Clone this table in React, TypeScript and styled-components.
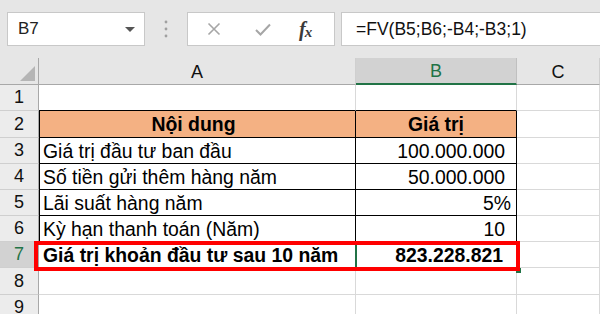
import React from "react";
import styled, { createGlobalStyle } from "styled-components";

const GlobalStyle = createGlobalStyle`
  html, body { margin: 0; padding: 0; background: #fff; }
  body { font-family: "Liberation Sans", Arial, sans-serif; }
`;

const GREEN = "#217346";
const GRID = "#d9d9d9";

type Row = {
  label: string;
  value: string;
  kind: "empty" | "head" | "body" | "result";
  pad?: number;
};

const rows: Row[] = [
  { label: "", value: "", kind: "empty" },
  { label: "Nội dung", value: "Giá trị", kind: "head" },
  { label: "Giá trị đầu tư ban đầu", value: "100.000.000", kind: "body" },
  { label: "Số tiền gửi thêm hàng năm", value: "50.000.000", kind: "body" },
  { label: "Lãi suất hàng năm", value: "5%", kind: "body", pad: 5 },
  { label: "Kỳ hạn thanh toán (Năm)", value: "10", kind: "body" },
  { label: "Giá trị khoản đầu tư sau 10 năm", value: "823.228.821", kind: "result", pad: 13 },
  { label: "", value: "", kind: "empty" },
  { label: "", value: "", kind: "empty" },
];

const heights = [26, 27, 26, 26, 26, 26, 26, 27, 26];

const Page = styled.div`
  width: 600px;
  height: 314px;
  overflow: hidden;
  background: #fff;
`;

const Toolbar = styled.div`
  height: 58px;
  background: #e6e6e6;
  display: flex;
  align-items: center;
  padding-left: 7px;
`;

const NameBox = styled.div`
  width: 138px;
  height: 34px;
  box-sizing: border-box;
  background: #fff;
  border: 1px solid #c8c8c8;
  display: flex;
  align-items: center;
  justify-content: space-between;
  padding: 0 9px 0 10px;
  font-size: 17px;
  color: #222;
`;

const Caret = styled.span`
  width: 0;
  height: 0;
  border-left: 5px solid transparent;
  border-right: 5px solid transparent;
  border-top: 5px solid #555;
`;

const Grip = styled.div`
  width: 42px;
  display: flex;
  justify-content: center;
`;

const FxButtons = styled.div`
  width: 148px;
  height: 34px;
  box-sizing: border-box;
  background: #fff;
  border: 1px solid #c8c8c8;
  display: flex;
  align-items: center;
  padding-left: 19px;
`;

const IconSlot = styled.span<{ $w: number }>`
  width: ${(p) => p.$w}px;
  display: flex;
  align-items: center;
`;

const FxText = styled.span`
  font-family: "Liberation Serif", "Times New Roman", serif;
  font-style: italic;
  font-weight: 700;
  font-size: 20px;
  color: #3a3a3a;
  letter-spacing: -1px;
  sub {
    font-size: 15px;
    vertical-align: -1px;
  }
`;

const FormulaInput = styled.div`
  flex: 1;
  margin-left: 6px;
  height: 34px;
  box-sizing: border-box;
  background: #fff;
  border: 1px solid #c8c8c8;
  border-right: none;
  display: flex;
  align-items: center;
  padding-left: 14px;
  font-size: 17.5px;
  color: #111;
`;

const Sheet = styled.div`
  position: relative;
  display: grid;
  grid-template-columns: 39px 317px 161px 1fr;
`;

const ColHead = styled.div<{ $active?: boolean }>`
  height: 27px;
  box-sizing: border-box;
  background: ${(p) => (p.$active ? "#d2d2d2" : "#e6e6e6")};
  border-right: 1px solid ${(p) => (p.$active ? "#c0c0c0" : "#cfcfcf")};
  border-bottom: ${(p) => (p.$active ? `2px solid ${GREEN}` : "1px solid #a8a8a8")};
  display: flex;
  align-items: center;
  justify-content: center;
  font-size: 18px;
  color: ${(p) => (p.$active ? GREEN : "#111")};
  padding-top: 2px;
`;

const Corner = styled(ColHead)`
  border-right: 1px solid #a8a8a8;
  align-items: flex-end;
  justify-content: flex-end;
  padding: 0 3px 3px 0;
`;

const RowHead = styled.div<{ $active?: boolean; $h: number }>`
  height: ${(p) => p.$h}px;
  box-sizing: border-box;
  background: ${(p) => (p.$active ? "#d2d2d2" : "#ececec")};
  border-right: 1px solid #a8a8a8;
  border-bottom: 1px solid #cfcfcf;
  display: flex;
  align-items: center;
  justify-content: center;
  font-size: 18px;
  color: ${(p) => (p.$active ? GREEN : "#111")};
`;

const Cell = styled.div<{
  $h: number;
  $fill?: boolean;
  $boxed?: boolean;
  $lineBelow?: boolean;
  $left?: boolean;
  $align?: "left" | "center" | "right";
  $bold?: boolean;
  $pad?: number;
}>`
  height: ${(p) => p.$h}px;
  box-sizing: border-box;
  background: ${(p) => (p.$fill ? "#f4b183" : "#fff")};
  border-right: 1px solid ${(p) => (p.$boxed ? "#000" : GRID)};
  border-bottom: 1px solid ${(p) => (p.$boxed || p.$lineBelow ? "#000" : GRID)};
  box-shadow: ${(p) => (p.$left ? "inset 1px 0 0 #000" : "none")};
  display: flex;
  align-items: center;
  justify-content: ${(p) =>
    p.$align === "right" ? "flex-end" : p.$align === "center" ? "center" : "flex-start"};
  padding: 1px ${(p) => p.$pad ?? 11}px 0 4px;
  font-size: 19.4px;
  font-weight: ${(p) => (p.$bold ? 700 : 400)};
  color: #000;
  white-space: nowrap;
`;

const Selection = styled.div`
  position: absolute;
  left: 355px;
  top: 183px;
  width: 163px;
  height: 28px;
  box-sizing: border-box;
  border: 2px solid ${GREEN};
`;

const Handle = styled.div`
  position: absolute;
  left: 516px;
  top: 210px;
  width: 5px;
  height: 5px;
  background: ${GREEN};
`;

const Highlight = styled.div`
  position: absolute;
  left: 34px;
  top: 183px;
  width: 486px;
  height: 30px;
  box-sizing: border-box;
  border: 4px solid #ff0000;
`;

const CloseIcon = () => (
  <svg width="14" height="14" viewBox="0 0 14 14">
    <path d="M1.5 1.5 L12.5 12.5 M12.5 1.5 L1.5 12.5" stroke="#a6a6a6" strokeWidth="1.6" fill="none" />
  </svg>
);

const CheckIcon = () => (
  <svg width="16" height="13" viewBox="0 0 16 13">
    <path d="M1 7 L5.5 11.5 L15 1.5" stroke="#a6a6a6" strokeWidth="2" fill="none" />
  </svg>
);

const Dots = () => (
  <svg width="4" height="18" viewBox="0 0 4 18">
    <circle cx="2" cy="2" r="1.4" fill="#a0a0a0" />
    <circle cx="2" cy="9" r="1.4" fill="#a0a0a0" />
    <circle cx="2" cy="16" r="1.4" fill="#a0a0a0" />
  </svg>
);

const CornerMark = () => (
  <svg width="15" height="15" viewBox="0 0 15 15">
    <polygon points="15,0 15,15 0,15" fill="#b5b5b5" />
  </svg>
);

export default function App() {
  return (
    <Page>
      <GlobalStyle />
      <Toolbar>
        <NameBox>
          <span>B7</span>
          <Caret />
        </NameBox>
        <Grip>
          <Dots />
        </Grip>
        <FxButtons>
          <IconSlot $w={48}>
            <CloseIcon />
          </IconSlot>
          <IconSlot $w={44}>
            <CheckIcon />
          </IconSlot>
          <FxText>
            f<sub>x</sub>
          </FxText>
        </FxButtons>
        <FormulaInput>=FV(B5;B6;-B4;-B3;1)</FormulaInput>
      </Toolbar>

      <Sheet>
        <Corner>
          <CornerMark />
        </Corner>
        <ColHead>A</ColHead>
        <ColHead $active>B</ColHead>
        <ColHead>C</ColHead>

        {rows.map((r, i) => {
          const h = heights[i];
          const boxed = r.kind === "head" || r.kind === "body";
          const next = rows[i + 1];
          const lineBelow = next && next.kind === "head";
          const bold = r.kind === "head" || r.kind === "result";
          return (
            <React.Fragment key={i}>
              <RowHead $h={h} $active={i === 6}>
                {i + 1}
              </RowHead>
              <Cell
                $h={h}
                $fill={r.kind === "head"}
                $boxed={boxed}
                $lineBelow={lineBelow}
                $left={boxed}
                $align={r.kind === "head" ? "center" : "left"}
                $bold={bold}
              >
                {r.label}
              </Cell>
              <Cell
                $h={h}
                $fill={r.kind === "head"}
                $boxed={boxed}
                $lineBelow={lineBelow}
                $align={r.kind === "head" ? "center" : "right"}
                $bold={bold}
                $pad={r.kind === "head" ? 4 : r.pad}
              >
                {r.value}
              </Cell>
              <Cell $h={h} />
            </React.Fragment>
          );
        })}

        <Selection />
        <Handle />
        <Highlight />
      </Sheet>
    </Page>
  );
}
